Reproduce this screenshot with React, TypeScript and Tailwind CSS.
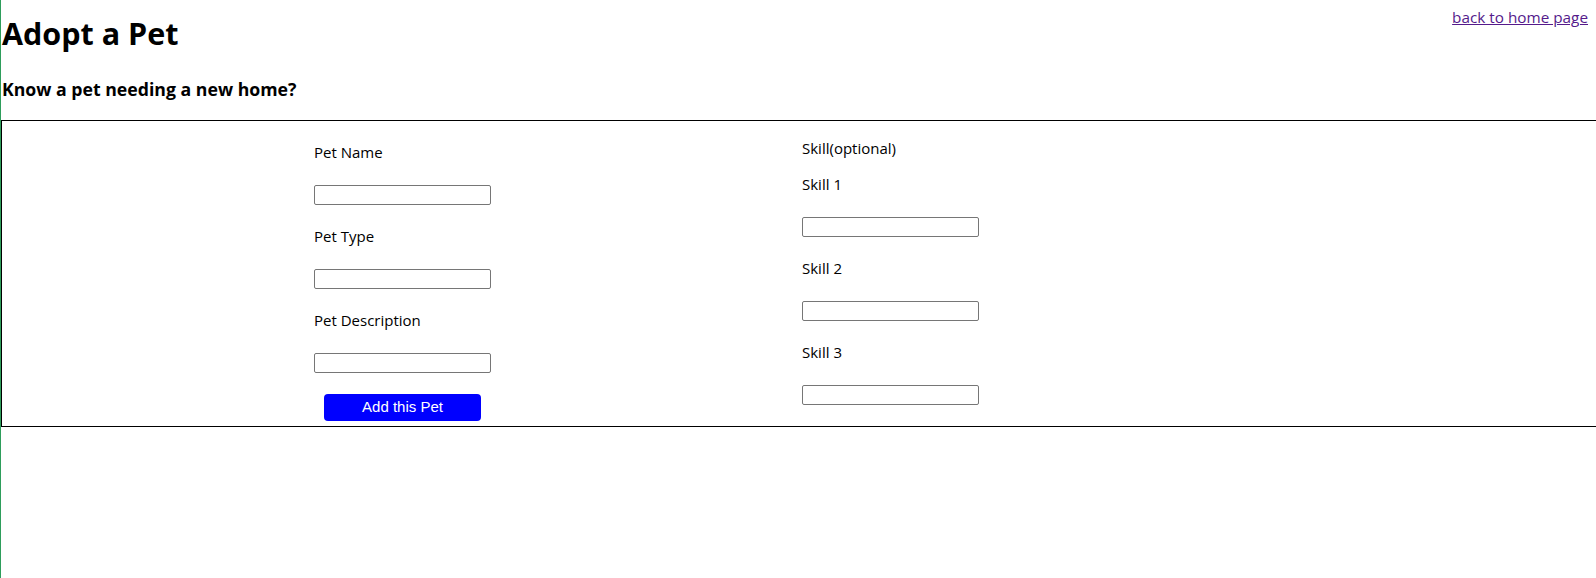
import React, { useState } from "react";

const inputClass =
  "block w-[177px] h-[20px] border border-[#767676] rounded-[2px] bg-white px-1 text-[13px] outline-none";
const labelClass = "block text-[15px] leading-[21px]";

const App: React.FC = () => {
  const [petName, setPetName] = useState("");
  const [petType, setPetType] = useState("");
  const [petDescription, setPetDescription] = useState("");
  const [skills, setSkills] = useState(["", "", ""]);

  const handleAddPet = (e: React.FormEvent) => {
    e.preventDefault();
    console.log({ petName, petType, petDescription, skills });
  };

  return (
    <div className="min-h-screen overflow-hidden border-l border-[#2e9d5b] bg-white text-black font-['Open_Sans',sans-serif]">
      <div className="flex items-start justify-between">
        <h1 className="pl-[1px] pt-3 text-[30.5px] font-bold leading-[42px]">
          Adopt a Pet
        </h1>
        <a
          href="#"
          className="mr-2 mt-[7px] text-[15.3px] leading-[20px] text-[#551a8b] underline"
        >
          back to home page
        </a>
      </div>
      <h3 className="mt-[23px] pl-[1px] text-[17.7px] font-bold leading-[24px]">
        Know a pet needing a new home?
      </h3>

      <form
        onSubmit={handleAddPet}
        className="mt-[19px] flex items-start border-y border-l border-black"
      >
        <div className="ml-[312px] flex w-[177px] flex-col pt-[21px] pb-[5px]">
          <label htmlFor="petName" className={labelClass}>
            Pet Name
          </label>
          <input
            id="petName"
            type="text"
            value={petName}
            onChange={(e) => setPetName(e.target.value)}
            className={`${inputClass} mt-[22px]`}
          />
          <label htmlFor="petType" className={`${labelClass} mt-[21px]`}>
            Pet Type
          </label>
          <input
            id="petType"
            type="text"
            value={petType}
            onChange={(e) => setPetType(e.target.value)}
            className={`${inputClass} mt-[22px]`}
          />
          <label htmlFor="petDescription" className={`${labelClass} mt-[21px]`}>
            Pet Description
          </label>
          <input
            id="petDescription"
            type="text"
            value={petDescription}
            onChange={(e) => setPetDescription(e.target.value)}
            className={`${inputClass} mt-[22px]`}
          />
          <button
            type="submit"
            className="mt-[21px] h-[27px] w-[157px] self-center rounded-[4px] bg-[#0000ff] text-[15px] text-white font-['Liberation_Sans',Arial,sans-serif]"
          >
            Add this Pet
          </button>
        </div>

        <div className="ml-[311px] flex w-[177px] flex-col pt-[17px]">
          <p className={labelClass}>Skill(optional)</p>
          {skills.map((skill, i) => (
            <div key={i} className={i === 0 ? "mt-[15px]" : "mt-[21px]"}>
              <label htmlFor={`skill${i + 1}`} className={labelClass}>
                Skill {i + 1}
              </label>
              <input
                id={`skill${i + 1}`}
                type="text"
                value={skill}
                onChange={(e) => {
                  const next = [...skills];
                  next[i] = e.target.value;
                  setSkills(next);
                }}
                className={`${inputClass} mt-[22px]`}
              />
            </div>
          ))}
        </div>
      </form>
    </div>
  );
};

export default App;
